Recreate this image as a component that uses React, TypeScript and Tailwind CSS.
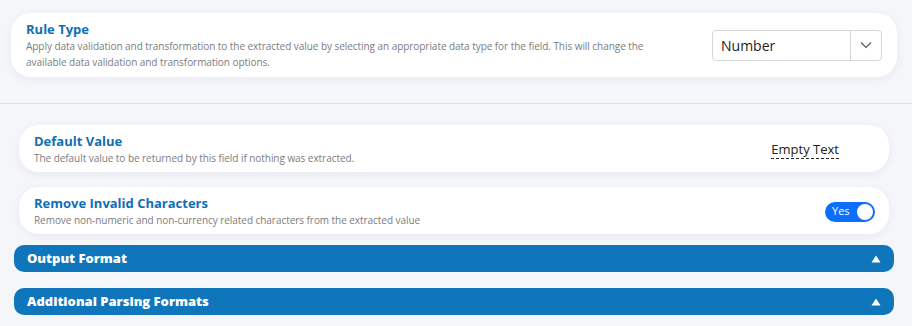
import React from "react";

const font = { fontFamily: '"Segoe UI", "Open Sans", "Noto Sans", sans-serif' };

function Card({
  title,
  desc,
  children,
  className,
}: {
  title: string;
  desc: React.ReactNode;
  children: React.ReactNode;
  className?: string;
}) {
  return (
    <div
      className={`flex items-center justify-between bg-white rounded-[20px] shadow-[0_2px_10px_rgba(30,40,80,0.06)] ${className ?? ""}`}
    >
      <div className="flex flex-col">
        <h3 className="text-[13px] leading-[18px] font-bold text-[#0f6fb4]">{title}</h3>
        <p className="text-[10px] leading-[16px] tracking-[-0.05px] text-[#7c7c80]">{desc}</p>
      </div>
      {children}
    </div>
  );
}

function Section({ title }: { title: string }) {
  return (
    <div className="flex items-center justify-between h-[27px] rounded-[10px] bg-[#0f76bc] pl-[13px] pr-[13px]">
      <span className="text-[13px] font-extrabold text-white">{title}</span>
      <svg width="10" height="8" viewBox="0 0 10 8">
        <path d="M5 0.5 L9.5 7.5 L0.5 7.5 Z" fill="white" />
      </svg>
    </div>
  );
}

export default function App() {
  return (
    <div className="w-[912px] h-[326px] bg-[#f5f6fa] overflow-hidden" style={font}>
      <div className="pt-[13px] px-[11px] pr-[15px]">
        <Card
          title="Rule Type"
          className="h-[64px] pl-[15px] pr-[15px]"
          desc={
            <>
              Apply data validation and transformation to the extracted value by selecting an appropriate data type for the field. This will change the
              <br />
              available data validation and transformation options.
            </>
          }
        >
          <div className="flex items-stretch w-[170px] h-[31px] border border-[#d4d6dc] rounded-[4px] shrink-0">
            <span className="flex-1 flex items-center pl-[8px] text-[14px] text-[#222]">Number</span>
            <span className="w-[31px] border-l border-[#d4d6dc] flex items-center justify-center">
              <svg width="12" height="8" viewBox="0 0 12 8" fill="none" stroke="#555" strokeWidth="1.1">
                <path d="M1 1.5 L6 6.5 L11 1.5" />
              </svg>
            </span>
          </div>
        </Card>
      </div>
      <div className="mt-[26px] border-t border-[#dcdde3]" />
      <div className="pt-[21px] px-[19px] pr-[23px] flex flex-col gap-[15px]">
        <Card
          title="Default Value"
          className="h-[47px] pl-[15px] pr-[50px]"
          desc="The default value to be returned by this field if nothing was extracted."
        >
          <span className="text-[13px] leading-[17px] text-[#222] border-b border-dashed border-[#222] mt-[2px]">
            Empty Text
          </span>
        </Card>
        <Card
          title="Remove Invalid Characters"
          className="h-[47px] pl-[15px] pr-[14px]"
          desc="Remove non-numeric and non-currency related characters from the extracted value"
        >
          <div className="flex items-center w-[50px] h-[20px] rounded-full bg-[#0d6efd] pl-[7px] pr-[2px] mt-[2px] justify-between">
            <span className="text-[11px] text-white">Yes</span>
            <span className="w-[16px] h-[16px] rounded-full bg-white" />
          </div>
        </Card>
      </div>
      <div className="pt-[11px] pl-[14px] pr-[18px] flex flex-col gap-[16px]">
        <Section title="Output Format" />
        <Section title="Additional Parsing Formats" />
      </div>
    </div>
  );
}
